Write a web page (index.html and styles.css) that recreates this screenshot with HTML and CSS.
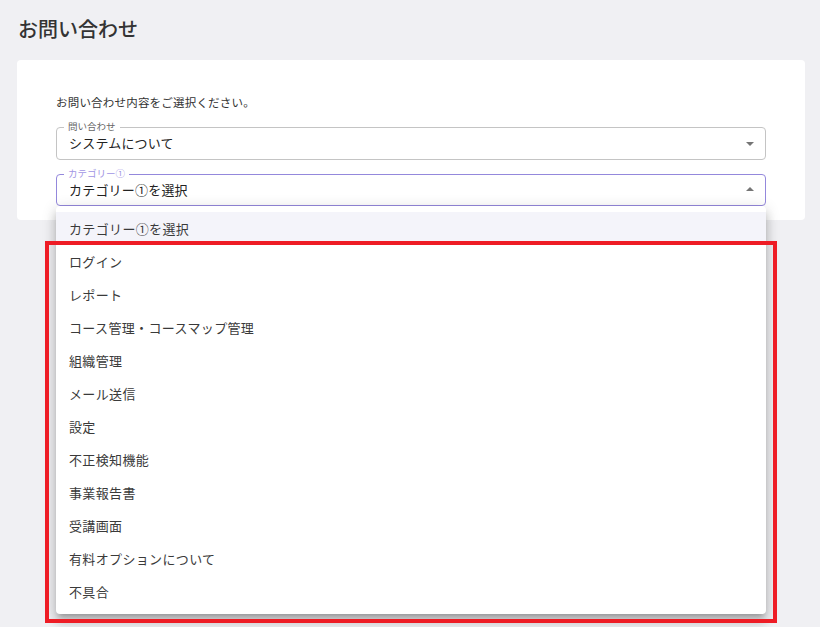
FILE: index.html
```html
<!DOCTYPE html>
<html lang="ja">
<head>
    <meta charset="UTF-8">
    <title>お問い合わせ</title>
    <link rel="stylesheet" href="styles.css">
</head>
<body>
    <h1 class="title">お問い合わせ</h1>

    <div class="card">
        <p class="lead">お問い合わせ内容をご選択ください。</p>

        <!-- 問い合わせ -->
        <div class="field">
            <span class="field-label">問い合わせ</span>
            <div class="field-value">システムについて</div>
            <span class="arrow"></span>
        </div>

        <!-- カテゴリー①（開いている状態） -->
        <div class="field open">
            <span class="field-label">カテゴリー①</span>
            <div class="field-value">カテゴリー①を選択</div>
            <span class="arrow up"></span>

            <ul class="menu">
                <li class="selected">カテゴリー①を選択</li>
                <li>ログイン</li>
                <li>レポート</li>
                <li>コース管理・コースマップ管理</li>
                <li>組織管理</li>
                <li>メール送信</li>
                <li>設定</li>
                <li>不正検知機能</li>
                <li>事業報告書</li>
                <li>受講画面</li>
                <li>有料オプションについて</li>
                <li>不具合</li>
            </ul>
        </div>
    </div>

    <!-- 赤枠（注釈） -->
    <div class="mark"></div>
</body>
</html>
```

FILE: styles.css
```css
html,body{
    margin: 0; padding: 0;
}
body{
    background-color: #f0f0f3;
    font-family: "Noto Sans CJK JP", "Noto Sans", sans-serif;
    color: #333;
    height: 627px;
    overflow: hidden;
    position: relative;
}
.title{
    margin: 0;
    padding: 15px 0 0 18px;
    height: 45px;
    box-sizing: border-box;
    font-size: 20px;
    font-weight: 500;
    line-height: 28px;
    color: #333;
}
/* 白いカード */
.card{
    margin: 15px 15px 0 17px;
    height: 160px;
    box-sizing: border-box;
    background-color: #fff;
    border-radius: 4px;
    padding: 33px 39px 0 39px;
}
.lead{
    margin: 0 0 16px;
    font-size: 11.5px;
    letter-spacing: .2px;
    line-height: 18px;
    color: #333;
}
/* セレクトボックス */
.field{
    position: relative;
    height: 33px;
    box-sizing: border-box;
    border: 1px solid #c4c4c4;
    border-radius: 4px;
    margin-bottom: 14px;
}
.field.open{
    border-color: #9488dc;
    height: 32px;
}
.field-label{
    position: absolute;
    top: -8px; left: 7px;
    padding: 0 4px;
    background-color: #fff;
    font-size: 9.5px;
    line-height: 13px;
    color: #666;
}
.field.open .field-label{
    color: #a195e4;
}
.field-value{
    padding: 0 12px;
    font-size: 13px;
    letter-spacing: .2px;
    line-height: 29px;
    color: #222;
}
.arrow{
    position: absolute;
    right: 11px; top: 14px;
    width: 0; height: 0;
    border-left: 4px solid transparent;
    border-right: 4px solid transparent;
    border-top: 4px solid #757575;
}
.arrow.up{
    top: 12px;
    border-top: none;
    border-bottom: 4px solid #757575;
}
/* ドロップダウンメニュー */
.menu{
    position: absolute;
    top: 31px; left: -1px; right: -1px;
    margin: 0; padding: 6px 0;
    list-style: none;
    background-color: #fff;
    border-radius: 4px;
    box-shadow: 0 5px 5px -3px rgba(0,0,0,.2), 0 8px 10px 1px rgba(0,0,0,.14), 0 3px 14px 2px rgba(0,0,0,.12);
    z-index: 2;
}
.menu li{
    height: 33px;
    padding: 1px 13px 0;
    box-sizing: border-box;
    font-size: 13px;
    letter-spacing: .35px;
    line-height: 32px;
    color: #3a3a3a;
}
.menu li.selected{
    background-color: #f4f4fa;
}
/* 赤枠 */
.mark{
    position: absolute;
    left: 45px; top: 241px;
    width: 732px; height: 382px;
    box-sizing: border-box;
    border: 4px solid #ee1c25;
    z-index: 3;
}
```
